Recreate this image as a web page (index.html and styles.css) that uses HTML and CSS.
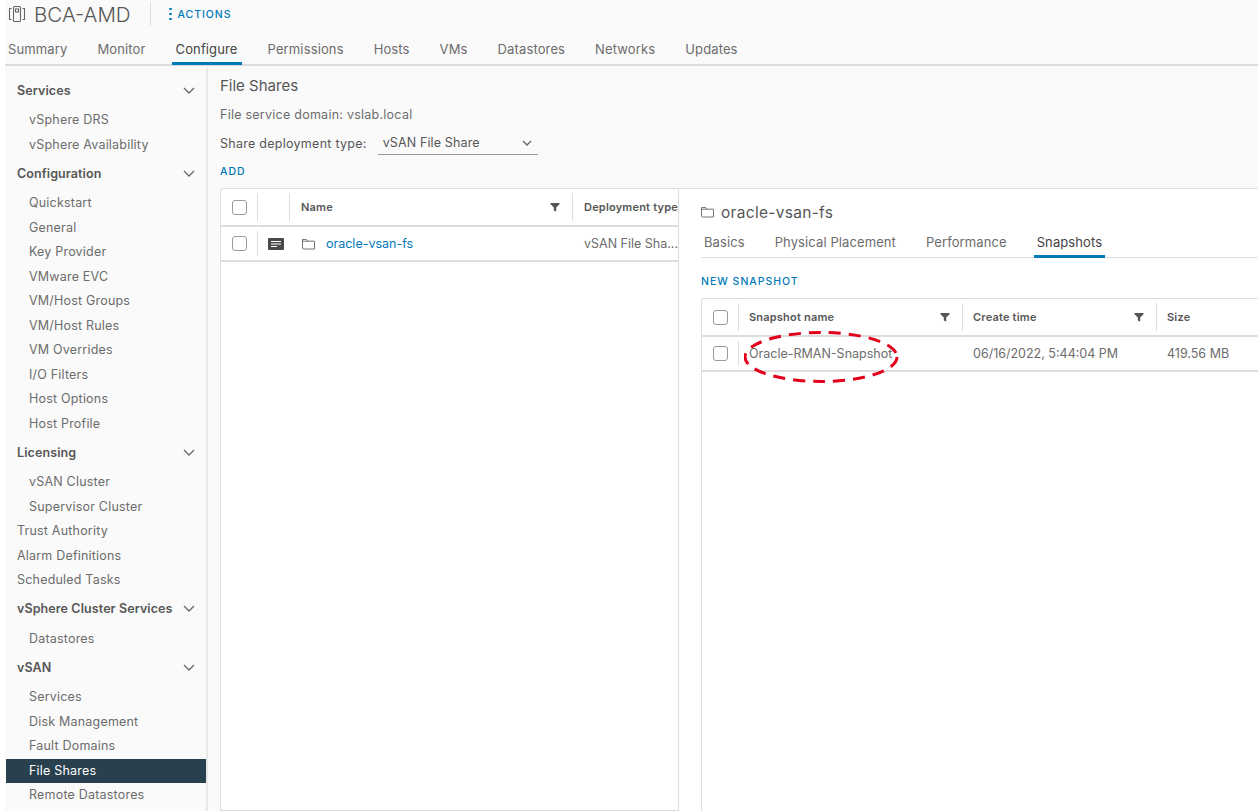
FILE: index.html
```html
<!DOCTYPE html>
<html lang="en">
<head>
    <meta charset="UTF-8">
    <title>BCA-AMD - File Shares</title>
    <link rel="stylesheet" href="styles.css">
</head>
<body>
<div class="page">
    <header class="title-bar">
        <svg class="cluster-icon" width="18" height="18" viewBox="0 0 18 18" fill="none" stroke="#666" stroke-width="1.1">
            <rect x="5.5" y="1.5" width="7" height="15" rx="1"/>
            <rect x="7.5" y="4" width="3" height="3"/>
            <path d="M3.5 3.5H1.5V14.5H3.5M14.5 3.5H16.5V14.5H14.5"/>
        </svg>
        <span class="object-name">BCA-AMD</span>
        <span class="title-sep"></span>
        <span class="actions"><span class="dots"><i></i><i></i><i></i></span>ACTIONS</span>
    </header>

    <nav class="main-tabs">
        <a>Summary</a>
        <a>Monitor</a>
        <a class="active">Configure</a>
        <a>Permissions</a>
        <a>Hosts</a>
        <a>VMs</a>
        <a>Datastores</a>
        <a>Networks</a>
        <a>Updates</a>
    </nav>

    <div class="content">
        <aside class="sidebar">
            <div class="side-head">Services <svg class="chev" width="12" height="7" viewBox="0 0 12 7"><path d="M1 1l5 5 5-5"/></svg></div>
            <div class="side-item">vSphere DRS</div>
            <div class="side-item">vSphere Availability</div>
            <div class="side-head">Configuration <svg class="chev" width="12" height="7" viewBox="0 0 12 7"><path d="M1 1l5 5 5-5"/></svg></div>
            <div class="side-item">Quickstart</div>
            <div class="side-item">General</div>
            <div class="side-item">Key Provider</div>
            <div class="side-item">VMware EVC</div>
            <div class="side-item">VM/Host Groups</div>
            <div class="side-item">VM/Host Rules</div>
            <div class="side-item">VM Overrides</div>
            <div class="side-item">I/O Filters</div>
            <div class="side-item">Host Options</div>
            <div class="side-item">Host Profile</div>
            <div class="side-head">Licensing <svg class="chev" width="12" height="7" viewBox="0 0 12 7"><path d="M1 1l5 5 5-5"/></svg></div>
            <div class="side-item">vSAN Cluster</div>
            <div class="side-item">Supervisor Cluster</div>
            <div class="side-item top">Trust Authority</div>
            <div class="side-item top">Alarm Definitions</div>
            <div class="side-item top">Scheduled Tasks</div>
            <div class="side-head">vSphere Cluster Services <svg class="chev" width="12" height="7" viewBox="0 0 12 7"><path d="M1 1l5 5 5-5"/></svg></div>
            <div class="side-item">Datastores</div>
            <div class="side-head">vSAN <svg class="chev" width="12" height="7" viewBox="0 0 12 7"><path d="M1 1l5 5 5-5"/></svg></div>
            <div class="side-item">Services</div>
            <div class="side-item">Disk Management</div>
            <div class="side-item">Fault Domains</div>
            <div class="side-item selected">File Shares</div>
            <div class="side-item">Remote Datastores</div>
        </aside>

        <main class="main">
            <h2 class="page-title">File Shares</h2>
            <p class="domain">File service domain: vslab.local</p>
            <div class="deploy-row">
                <span>Share deployment type:</span>
                <div class="fake-select">vSAN File Share <svg class="chev" width="10" height="6" viewBox="0 0 10 6"><path d="M1 1l4 4 4-4"/></svg></div>
            </div>
            <a class="link-btn add-btn">ADD</a>

            <div class="split">
                <section class="shares">
                    <div class="grid-row grid-head shares-cols">
                        <div class="cell"><span class="check"></span></div>
                        <div class="cell"></div>
                        <div class="cell name-cell">Name
                            <svg class="filter" width="10" height="10" viewBox="0 0 10 10"><path d="M0.5 1H9.5V2.2L6.2 5.4V9.5L3.8 8.5V5.4L0.5 2.2Z"/></svg>
                        </div>
                        <div class="cell clip">Deployment type</div>
                    </div>
                    <div class="grid-row shares-cols">
                        <div class="cell"><span class="check"></span></div>
                        <div class="cell comment">
                            <svg width="16" height="12" viewBox="0 0 16 12"><rect width="16" height="12" rx="1" fill="#4a4a4a"/><path d="M3 3.5H13M3 6H13M3 8.5H9" stroke="#fff" stroke-width="1"/></svg>
                        </div>
                        <div class="cell file-cell">
                            <svg class="folder" width="13" height="12" viewBox="0 0 13 12"><path d="M0.5 10.5V1.5H4.5L6 3.2H12.5V11H1Z"/><path d="M0.5 3.2H6"/></svg>
                            <a class="share-link">oracle-vsan-fs</a>
                        </div>
                        <div class="cell clip">vSAN File Sha...</div>
                    </div>
                </section>

                <section class="detail">
                    <h3 class="detail-title">
                        <svg class="folder" width="13" height="12" viewBox="0 0 13 12"><path d="M0.5 10.5V1.5H4.5L6 3.2H12.5V11H1Z"/><path d="M0.5 3.2H6"/></svg>
                        oracle-vsan-fs
                    </h3>
                    <nav class="detail-tabs">
                        <a>Basics</a>
                        <a>Physical Placement</a>
                        <a>Performance</a>
                        <a class="active">Snapshots</a>
                    </nav>
                    <a class="link-btn snap-btn">NEW SNAPSHOT</a>
                    <div class="snap-table">
                        <div class="grid-row grid-head snap-cols">
                            <div class="cell"><span class="check"></span></div>
                            <div class="cell name-cell">Snapshot name
                                <svg class="filter" width="10" height="10" viewBox="0 0 10 10"><path d="M0.5 1H9.5V2.2L6.2 5.4V9.5L3.8 8.5V5.4L0.5 2.2Z"/></svg>
                            </div>
                            <div class="cell name-cell">Create time
                                <svg class="filter" width="10" height="10" viewBox="0 0 10 10"><path d="M0.5 1H9.5V2.2L6.2 5.4V9.5L3.8 8.5V5.4L0.5 2.2Z"/></svg>
                            </div>
                            <div class="cell">Size</div>
                        </div>
                        <div class="grid-row snap-row snap-cols">
                            <div class="cell"><span class="check"></span></div>
                            <div class="cell">Oracle-RMAN-Snapshot</div>
                            <div class="cell">06/16/2022, 5:44:04 PM</div>
                            <div class="cell">419.56 MB</div>
                        </div>
                        <!-- red callout drawn over the first row -->
                        <svg class="callout" width="160" height="56" viewBox="0 0 160 56" fill="none">
                            <ellipse cx="77" cy="28" rx="76" ry="24.5" stroke="#e2001a" stroke-width="3" stroke-dasharray="12 8"/>
                        </svg>
                    </div>
                </section>
            </div>
        </main>
    </div>
</div>
</body>
</html>
```

FILE: styles.css
```css
* {
    box-sizing: border-box;
}
html, body {
    height: 100%;
}
body {
    margin: 0;
    background-color: #fff;
    font-family: Inter, "Open Sans", sans-serif;
    font-size: 12.5px;
    color: #6c6c6c;
    overflow: hidden;
}
.page {
    margin-left: 5px;
    height: 811px;
    background-color: #fafafa;
    display: flex;
    flex-direction: column;
}

/* top bar */
.title-bar {
    height: 28px;
    display: flex;
    align-items: center;
    padding-left: 3px;
}
.cluster-icon {
    margin-right: 8px;
}
.object-name {
    font-size: 20.5px;
    font-weight: 300;
    color: #565656;
    width: 116px;
}
.title-sep {
    width: 1px;
    height: 24px;
    background-color: #ddd;
    margin-right: 18px;
}
.actions {
    display: flex;
    align-items: center;
    font-size: 10.5px;
    font-weight: 500;
    letter-spacing: 0.95px;
    color: #0079b8;
}
.dots {
    display: flex;
    flex-direction: column;
    gap: 2.5px;
    margin-right: 6px;
}
.dots i {
    width: 2.5px;
    height: 2.5px;
    border-radius: 50%;
    background-color: #0079b8;
}

.main-tabs {
    margin-top: 9px;
    height: 29px;
    display: flex;
    gap: 30px;
    padding-left: 3px;
    border-bottom: 2px solid #dcdcdc;
    font-size: 13px;
    letter-spacing: 0.13px;
}
.main-tabs a {
    height: 27px;
    line-height: 25px;
    position: relative;
}
.main-tabs a.active {
    color: #444;
    border-bottom: 3px solid #0079b8;
    margin: 0 -4px;
    padding: 0 4px;
    height: 28px;
}

.content {
    flex: 1;
    display: flex;
    min-height: 0;
}

/* left nav */
.sidebar {
    width: 203px;
    padding: 6px 0 0 1px;
    margin-top: 2px;
    border-right: 2px solid #e8e8e8;
    flex-shrink: 0;
    letter-spacing: 0.2px;
}
.side-head {
    height: 34px;
    padding: 0 11px 2px 11px;
    display: flex;
    align-items: center;
    justify-content: space-between;
    font-weight: 600;
    color: #565656;
    letter-spacing: 0.1px;
}
.side-item {
    height: 24.5px;
    line-height: 24.5px;
    padding-left: 23px;
}
.side-item.top {
    padding-left: 11px;
}
.side-item.selected {
    background-color: #29414e;
    color: #fff;
}
.chev {
    fill: none;
    stroke: #666;
    stroke-width: 1.3;
}

/* main area */
.main {
    flex: 1;
    min-width: 0;
    display: flex;
    flex-direction: column;
    padding: 10px 0 0 12px;
}
.page-title {
    margin: 0;
    font-size: 15px;
    font-weight: 400;
    color: #565656;
    line-height: 20px;
}
.domain {
    margin: 9px 0 0;
    line-height: 20px;
    letter-spacing: 0.25px;
}
.deploy-row {
    margin-top: 6px;
    height: 24px;
    display: flex;
    align-items: center;
    gap: 11px;
    color: #565656;
    letter-spacing: 0.27px;
}
.fake-select {
    width: 160px;
    height: 24px;
    padding: 0 6px 0 5px;
    display: flex;
    align-items: center;
    justify-content: space-between;
    border-bottom: 1px solid #999;
    letter-spacing: 0.13px;
}
.link-btn {
    color: #0079b8;
    font-size: 10.5px;
    font-weight: 500;
    letter-spacing: 1px;
    display: block;
}
.add-btn {
    margin-top: 9px;
    line-height: 16px;
}

.split {
    margin-top: 8px;
    flex: 1;
    display: flex;
    min-height: 0;
}

/* tables */
.shares {
    width: 458px;
    flex-shrink: 0;
    background-color: #fff;
    border: 1px solid #ddd;
    border-right: 0;
    border-radius: 3px 0 0 0;
    overflow: hidden;
}
.grid-row {
    display: grid;
    align-items: center;
    height: 35px;
    border-bottom: 2px solid #ddd;
}
.grid-head {
    height: 38px;
    font-size: 11px;
    font-weight: 600;
    color: #565656;
    letter-spacing: 0.2px;
}
.shares-cols {
    grid-template-columns: 36px 32px 283px 120px;
}
.snap-cols {
    grid-template-columns: 36px 224px 194px 130px;
}
.cell {
    height: 100%;
    display: flex;
    align-items: center;
    padding-left: 11px;
    white-space: nowrap;
    position: relative;
}
.grid-head .cell + .cell::before,
.snap-row .cell:nth-child(2)::before,
.shares-cols .cell:nth-child(2)::before {
    content: "";
    position: absolute;
    left: 0;
    top: 4px;
    bottom: 4px;
    width: 1px;
    background-color: #ddd;
}
.check {
    width: 15px;
    height: 15px;
    border: 1px solid #9a9a9a;
    border-radius: 3px;
    background-color: #fff;
    flex-shrink: 0;
}
.name-cell {
    justify-content: space-between;
    padding-right: 12px;
}
.shares .name-cell {
    padding-left: 12px;
}
.filter {
    fill: #555;
}
.comment {
    padding-left: 11px;
}
.file-cell {
    padding-left: 13px;
    gap: 11px;
}
.folder {
    fill: none;
    stroke: #666;
    stroke-width: 0.9;
    flex-shrink: 0;
}
.share-link {
    color: #0079b8;
    font-size: 12.5px;
}
.clip {
    overflow: hidden;
    padding-left: 12px;
}

/* detail panel */
.detail {
    flex: 1;
    min-width: 0;
    background-color: #fff;
    border-left: 1px solid #ddd;
    border-top: 1px solid #ddd;
    padding-left: 22px;
    overflow: hidden;
}
.detail-title {
    margin: 13px 0 0;
    height: 20px;
    display: flex;
    align-items: center;
    gap: 7px;
    font-size: 15.5px;
    font-weight: 400;
    color: #565656;
    letter-spacing: 0.3px;
}
.detail-tabs {
    margin-top: 7px;
    height: 29px;
    display: flex;
    gap: 30px;
    padding-left: 3px;
    border-bottom: 1px solid #ddd;
    font-size: 13px;
    letter-spacing: 0.1px;
}
.detail-tabs a {
    line-height: 26px;
}
.detail-tabs a.active {
    color: #444;
    height: 29px;
    margin: 0 -3px;
    padding: 0 3px;
    border-bottom: 3px solid #0079b8;
}
.snap-btn {
    margin-top: 16px;
    line-height: 16px;
}
.snap-table {
    margin-top: 8px;
    border-left: 1px solid #ddd;
    border-top: 1px solid #ddd;
    border-radius: 3px 0 0 0;
    height: 600px;
    position: relative;
}
.callout {
    position: absolute;
    left: 42px;
    top: 30px;
}
```
